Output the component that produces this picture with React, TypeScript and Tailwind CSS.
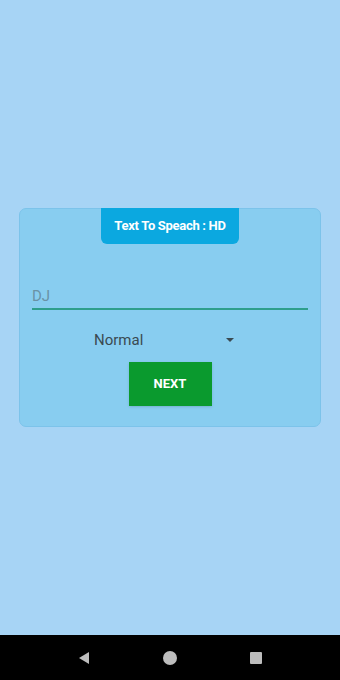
export default function App() {
  return (
    <div
      className="w-[340px] h-[680px] flex flex-col bg-[#a7d4f5]"
      style={{ fontFamily: "Roboto, 'Liberation Sans', sans-serif" }}
    >
      <div className="flex-1 flex flex-col pt-[208px] px-[19px]">
        <div className="h-[219px] rounded-[7px] bg-[#88cdf0] border border-[#7cc3ea] flex flex-col items-center">
          <div className="w-[138px] h-[36px] -mt-px rounded-b-[6px] bg-[#0ba8e0] flex items-center justify-center">
            <span className="text-[13px] font-bold text-white tracking-[-0.3px]">
              Text To Speach : HD
            </span>
          </div>
          <div className="w-full px-[12px] mt-[43px]">
            <div className="h-[23px] border-b-2 border-[#2e9e8c] flex items-start">
              <span className="text-[15px] leading-[18px] text-[#6a92a6]">DJ</span>
            </div>
          </div>
          <div className="w-full flex items-center mt-[19px] pl-[74px] pr-[86px] h-[22px]">
            <span className="flex-1 text-[15px] text-[#3a4a52]">Normal</span>
            <svg width="8" height="4" viewBox="0 0 8 4">
              <path d="M0 0 L8 0 L4 4 Z" fill="#3a4a52" />
            </svg>
          </div>
          <button
            type="button"
            className="mt-[11px] w-[83px] h-[44px] bg-[#0a9a2e] text-white text-[13px] font-bold shadow-sm"
          >
            NEXT
          </button>
        </div>
      </div>
      <div className="h-[45px] bg-black flex items-center justify-center gap-[64px]">
        <svg width="22" height="22" viewBox="0 0 22 22">
          <path d="M16 5 L16 17 L6 11 Z" fill="#bdbdbd" />
        </svg>
        <svg width="22" height="22" viewBox="0 0 22 22">
          <circle cx="11" cy="11" r="7" fill="#bdbdbd" />
        </svg>
        <svg width="22" height="22" viewBox="0 0 22 22">
          <rect x="5" y="5" width="12" height="12" rx="1" fill="#bdbdbd" />
        </svg>
      </div>
    </div>
  );
}
